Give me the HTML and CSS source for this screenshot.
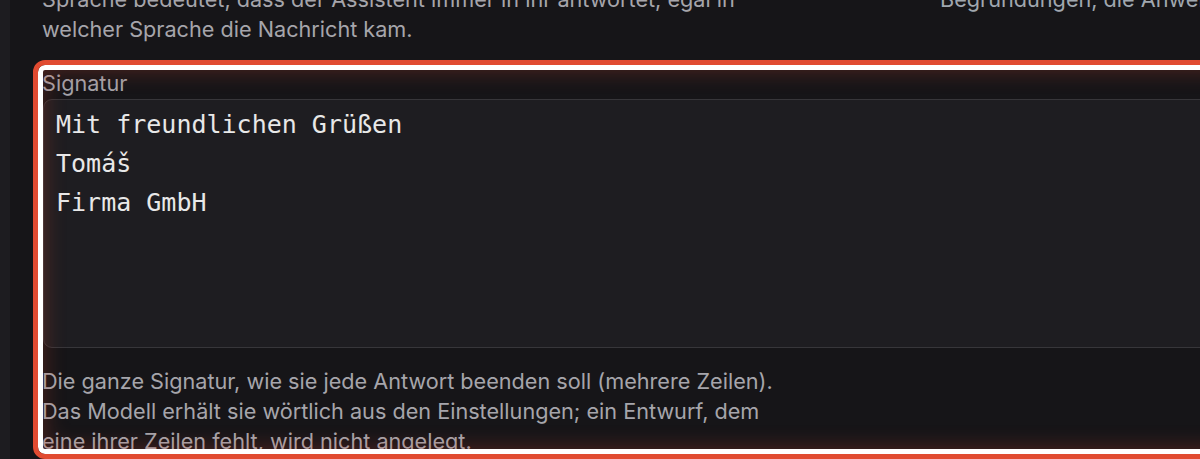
FILE: index.html
```html
<!DOCTYPE html>
<html lang="de">
<head>
<meta charset="utf-8">
<title>Einstellungen – Signatur</title>
<link rel="stylesheet" href="styles.css">
</head>
<body>
<div class="shell">
  <aside class="rail"></aside>
  <main class="main">
    <div class="content">
      <div class="cols">
        <p class="hint hint-wide">Sprache bedeutet, dass der Assistent immer in ihr antwortet, egal in welcher Sprache die Nachricht kam.</p>
        <p class="hint hint-alt">Begründungen, die Anweisungen folgen.</p>
      </div>
      <div class="field">
        <label class="label" for="sig">Signatur</label>
        <textarea id="sig" class="input" spellcheck="false">Mit freundlichen Grüßen
Tomáš
Firma GmbH</textarea>
        <p class="hint hint-wide">Die ganze Signatur, wie sie jede Antwort beenden soll (mehrere Zeilen). Das Modell erhält sie wörtlich aus den Einstellungen; ein Entwurf, dem eine ihrer Zeilen fehlt, wird nicht angelegt.</p>
      </div>
    </div>
  </main>
</div>
<div class="highlight" aria-hidden="true"></div>
</body>
</html>
```
FILE: styles.css
```css
html, body {
  margin: 0;
  padding: 0;
  height: 100%;
  overflow: hidden;
  background: #161518;
}
body {
  font-family: Inter, "Noto Sans", sans-serif;
  color: #a6a5ab;
}
.shell {
  display: flex;
  min-height: 100%;
}
.rail {
  width: 10px;
  flex: none;
  background: #1d1c20;
}
.main {
  flex: none;
  padding-left: 32px;
}
.content {
  width: 1764px;
  margin-top: -16px;
}
.cols {
  display: grid;
  grid-template-columns: 1fr 1fr;
  column-gap: 32px;
}
.hint {
  margin: 0;
  font-size: 21.65px;
  line-height: 30px;
}
.hint-wide {
  max-width: 740px;
}
.hint-alt {
  color: #a0a7af;
}
.field {
  margin-top: 25px;
  display: flex;
  flex-direction: column;
}
.label {
  font-size: 21.65px;
  line-height: 28px;
  color: #a3a2a8;
}
.input {
  margin: 2px 0 18px 1px;
  height: 249px;
  box-sizing: border-box;
  padding: 5px 12px;
  background: #1e1d21;
  border: 1px solid #37363a;
  border-radius: 9px;
  color: #e8e8e8;
  font-family: "DejaVu Sans Mono", monospace;
  font-size: 25px;
  line-height: 39px;
  resize: none;
  outline: none;
}
.highlight {
  position: absolute;
  left: 33px;
  top: 60px;
  width: 1300px;
  height: 399px;
  box-sizing: border-box;
  border: 5px solid #e14b31;
  border-radius: 12px;
  box-shadow: inset 0 0 0 5px #ffffff, inset 0 0 22px 6px rgba(225, 75, 49, 0.28);
  pointer-events: none;
}
```
